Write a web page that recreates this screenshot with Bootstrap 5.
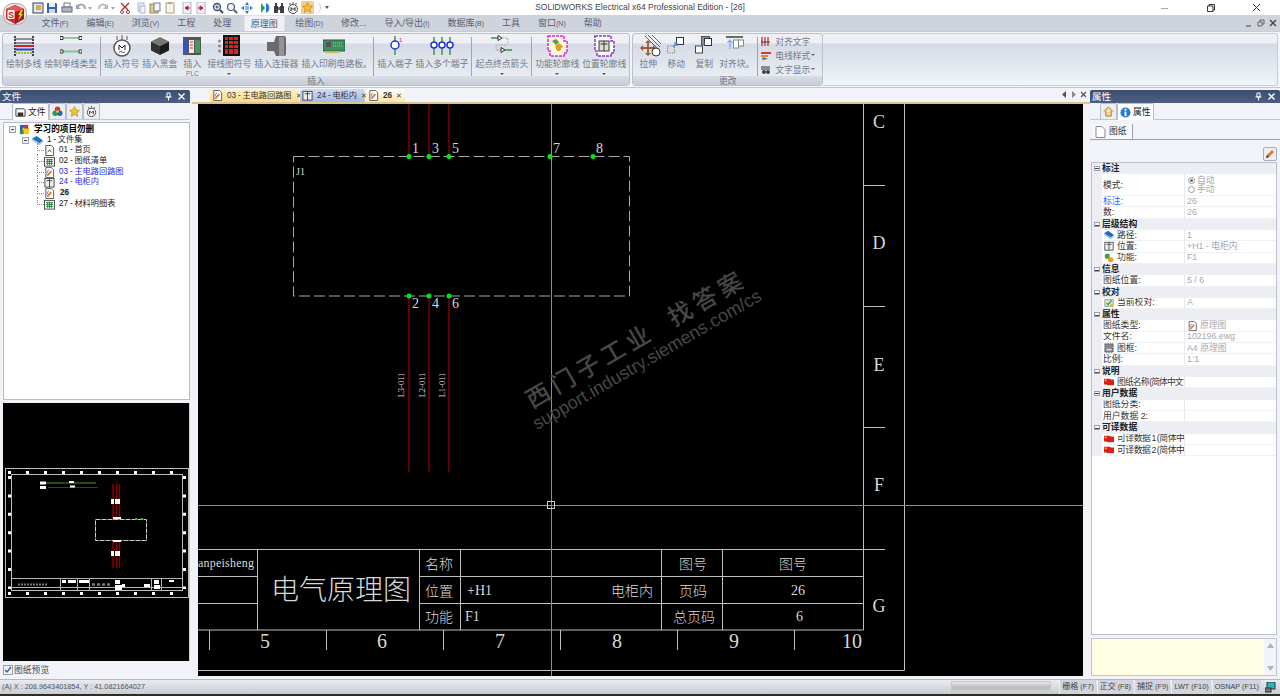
<!DOCTYPE html>
<html lang="zh-CN">
<head>
<meta charset="UTF-8" />
<title>SOLIDWORKS Electrical x64 Professional Edition - [26]</title>
<link href="https://cdn.jsdelivr.net/npm/bootstrap@5.3.3/dist/css/bootstrap.min.css" rel="stylesheet" />
<style>
  html, body { height: 696px; overflow: hidden; }
  body { width: 1280px; background: #f2f3f8; font-family: "Liberation Sans", "Noto Sans CJK SC", sans-serif; font-size: 8.8px; line-height: 11px; color: #333; }
  svg { display: block; flex: none; }

  /* title + quick access */
  .app-title { height: 15px; background: #fff; position: relative; flex: none; }
  .app-logo { position: absolute; left: 3px; top: 3px; z-index: 3; }
  .qat { position: absolute; left: 32px; top: 1px; height: 13px; padding-right: 6px; border-right: 1px solid #c6cad4; border-radius: 0 8px 8px 0; }
  .qat-btn { width: 12px; height: 12px; }
  .qg0 { margin-left: 0; } .qg1 { margin-left: 1px; } .qg2 { margin-left: 2px; } .qg3 { margin-left: 3px; }
  .qg4 { margin-left: 4px; } .qg5 { margin-left: 5px; } .qg7 { margin-left: 7px; }
  .qat-drop { position: absolute; left: 325px; top: 6px; width: 0; height: 0; border: 2px solid transparent; border-top: 3px solid #555; }
  .app-name { text-align: center; font: 8.5px/15px "Liberation Sans", sans-serif; color: #444; }
  .win-btns { position: absolute; right: 0; top: 0; }
  .win-btn { width: 46px; height: 15px; display: flex; align-items: center; justify-content: center; }

  /* menu row */
  .menu-row { height: 16px; background: #cfd3dc; flex: none; padding-left: 33px; position: relative; }
  .menu-row a { color: #59606e; text-decoration: none; font-size: 9px; line-height: 16px; display: block; text-align: center; white-space: nowrap; padding: 0 8.5px; margin-right: 1px; }
  .menu-row a small { font-size: 7px; }
  .menu-row a.on { background: #eff1f6; border-radius: 3px 3px 0 0; padding: 0 6px; margin: 0 2px 0 3px; color: #4e5562; border: 1px solid #dfe2e9; border-bottom: 0; }
  .mdi-btns { position: absolute; right: 3px; top: 4px; }

  /* ribbon */
  .ribbon { height: 57px; flex: none; background: #f4f5f9; border-bottom: 1px solid #c3c6ce; border-top: 1px solid #c8ccd6; padding: 1px 2px; gap: 2px; }
  .rb-group { height: 53px; border: 1px solid #bcc0cb; border-radius: 3px; background: linear-gradient(#eef0f6 0, #eef0f6 9px, #d6dae5 10px, #eef3f6 100%); position: relative; padding: 1px 3px 0; }
  .rb-fill { flex-grow: 1; height: 53px; margin-left: -2px; border: 1px solid #c9ccd5; border-left: 0; border-radius: 0 3px 3px 0; background: linear-gradient(#eef0f6 0, #eef0f6 9px, #d6dae5 10px, #eef6f9 100%); }
  .rb-cap { position: absolute; left: 0; right: 0; bottom: 0; height: 9px; background: linear-gradient(#d9dde6, #c8ccd7); text-align: center; color: #6f7785; line-height: 10px; font-size: 8.8px; border-radius: 0 0 3px 3px; }
  .rb-item { text-align: center; color: #727a89; white-space: nowrap; flex: none; }
  .rb-item > svg { margin: 0 auto 2px; }
  .rb-gap { margin-left: 3px; }
  .rb-gap-l { margin-left: 10px; }
  .rb-gap-m { margin-left: 6px; }
  .rb-note { font-size: 6.5px; line-height: 7px; }
  .rb-caret { width: 0; height: 0; margin: 3px auto 0; border: 2px solid transparent; border-top: 2px solid #555; }
  .rb-sep { width: 1px; height: 39px; background: #9fa4af; margin: 2px 3px 0; flex: none; }
  .rb-wide { width: 65px; }
  .rb-plc { width: 24px; }
  .rb-thin { width: 18px; }
  .rb-align { width: 31px; }
  .rb-mini { color: #727a89; height: 14px; line-height: 14px; white-space: nowrap; }
  .mini-caret { display: inline-block; width: 0; height: 0; border: 2px solid transparent; border-top: 2px solid #666; margin-left: 1px; vertical-align: 1px; }

  /* docking panels */
  .side-l { width: 192px; flex: none; padding: 2px 2px 0 0; }
  .side-r { width: 190px; flex: none; padding: 2px 0 0 0; }
  .dock-bar { height: 13px; background: linear-gradient(#3c4f72, #4c5f83); color: #fff; font-size: 9.5px; line-height: 13px; padding: 0 4px 0 2px; flex: none; border-radius: 2px 2px 0 0; }
  .dock-tabs { height: 17px; flex: none; border-bottom: 1px solid #c3c6cf; padding-left: 12px; }
  .side-r .dock-tabs { padding-left: 10px; }
  .dock-tab { height: 16px; border: 1px solid #b9bdc8; border-bottom: 0; background: #eceef4; border-radius: 2px 2px 0 0; padding: 0 2px; color: #222; line-height: 15px; font-size: 8.8px; gap: 2px; }
  .dock-tab.on { background: #fff; height: 17px; padding: 0 2px; }
  .dock-tab svg { width: 11px; height: 11px; }
  .tree-box { height: 278px; margin: 2px 0 3px 3px; background: #fff; border: 1px solid #b7bbc6; padding-top: 1px; flex: none; font-size: 8.2px; word-spacing: -.5px; }
  .tree-row { height: 10.7px; line-height: 10.7px; white-space: nowrap; color: #222; position: relative; }
  .tree-root { padding-left: 5px; font-weight: 700; font-size: 8.6px; color: #000; }
  .tree-sub { padding-left: 18px; }
  .tree-leaf { padding-left: 40px; }
  .tree-leaf::before { content: ""; position: absolute; left: 33px; top: -2px; height: 8px; width: 7px; border-left: 1px dotted #888; border-bottom: 1px dotted #888; }
  .tree-leaf.blue-ln { color: #2b2bdc; }
  .tree-cur { background: #eef0f4; font-weight: 700; padding: 0 1px; }
  .tree-plus { width: 7px; height: 7px; border: 1px solid #9aa2b0; background: #eef1f6; margin-right: 3px; position: relative; flex: none; }
  .tree-plus::after { content: ""; position: absolute; left: 1px; right: 1px; top: 2px; height: 1px; background: #445; }
  .preview-box { height: 258px; margin-left: 3px; background: #000; flex: none; border: 1px solid #c8ccd4; border-width: 0 1px 0 0; }
  .prev-check { height: 18px; margin-left: 3px; font-size: 8.8px; color: #444; }
  .prev-tick { width: 10px; height: 10px; border: 1px solid #98a0ae; background: #eef2f8; margin-right: 1px; }

  /* documents */
  .doc-col { width: 898px; flex: none; }
  .doc-tabs { height: 16px; flex: none; padding: 1px 0 0 18px; border-bottom: 2px solid #d9c48f; position: relative; gap: 1px; word-spacing: -.5px; }
  .doc-tab { height: 13px; padding: 0 3px 0 2px; line-height: 13px; font-size: 8.2px; color: #333; white-space: nowrap; border-radius: 3px 3px 0 0; }
  .doc-tab b { font-weight: 700; }
  .doc-tab.t-org { background: linear-gradient(#fff3c9, #ffd98a); width: 89px; }
  .doc-tab.t-blu { background: linear-gradient(#cfdcf2, #a5bde2); width: 65px; }
  .doc-tab.t-yel { background: linear-gradient(#fff, #ffe6a8); width: 39px; }
  .doc-x { font-size: 7px; margin-left: auto; color: #444; }
  .doc-ctl { position: absolute; right: 3px; top: 3px; }
  .canvas-wrap { margin-left: 6px; width: 885px; height: 572px; background: #000; flex: none; }

  /* properties */
  .sub-tab { height: 16px; margin-top: 4px; border-bottom: 1px solid #9aa0ad; flex: none; padding-left: 2px; }
  .sub-tab span { display: flex; align-items: center; gap: 3px; padding: 0 5px 0 3px; height: 15px; border-right: 1px solid #9aa0ad; color: #333; font-size: 8.8px; background: #f7f8fb; }
  .edit-row { height: 22px; flex: none; padding-right: 3px; padding-top: 7px; }
  .edit-btn { width: 14px; height: 14px; border: 1px solid #a8adb8; background: #eceef3; border-radius: 2px; }
  .prop-box { height: 473px; margin: 0 3px 0 1px; background: #fff; border: 1px solid #bcc0ca; flex: none; }
  .p-row { height: 11.32px; line-height: 11px; display: flex; white-space: nowrap; color: #333; }
  .p-row.tall { height: 21.7px; line-height: 20px; }
  .p-group { background: #eceef3; font-weight: 700; color: #222; }
  .p-group .p-sign { width: 10px; flex: none; position: relative; }
  .p-group .p-sign::after { content: ""; position: absolute; left: 2px; top: 3px; width: 6px; height: 5px; border: 1px solid #9aa0ad; background: linear-gradient(#fff 1.5px, #445 1.5px, #445 2.5px, #fff 2.5px); }
  .p-gut { width: 10px; flex: none; background: #eceef3; }
  .p-key { width: 83px; flex: none; padding-left: 1px; overflow: hidden; border-right: 1px solid #e6e8ed; display: flex; align-items: center; gap: 2px; border-bottom: 1px solid #f0f1f4; }
  .p-tight { letter-spacing: -.45px; word-spacing: -1px; }
  .p-tighter { letter-spacing: -.9px; word-spacing: -1px; }
  .p-val { flex-grow: 1; padding-left: 2px; color: #a5a8ae; border-bottom: 1px solid #f0f1f4; display: flex; align-items: center; gap: 2px; }
  .p-radio { line-height: 9.5px; color: #a5a8ae; padding-left: 1px; padding-top: 1px; }
  .p-radio i { display: inline-block; width: 7px; height: 7px; border: 1px solid #9a9a9a; border-radius: 50%; margin-right: 2px; vertical-align: -1px; }
  .p-radio i.on { background: radial-gradient(#777 35%, #fff 45%); }
  .hint-box { height: 38px; margin: 3px 3px 0 1px; background: #ffffe3; border: 1px solid #c3c6ce; flex: none; position: relative; }
  .hint-sb { width: 12px; margin-left: auto; height: 100%; background: #f3f4f8; }

  /* status */
  .status-bar { height: 15px; flex: none; background: linear-gradient(#e9ebf0, #c9ccd5); border-top: 1px solid #b5b8c1; color: #555; font-size: 7.3px; line-height: 14px; padding-left: 2px; }
  .status-progress { width: 100px; height: 12px; margin-left: auto; background: linear-gradient(#e5e6e8, #b7b9b9 60%, #d5d6d8); border: 1px solid #c7cad1; }
  .status-btn { padding: 0 2px; height: 15px; text-align: center; border-left: 1px solid #f0f1f4; background: #d2d5dd; margin-left: 1px; white-space: nowrap; color: #444; }
  .status-btn b { font-weight: 400; font-size: 8px; }
  .task-strip { height: 3px; background: #2c2c24; flex: none; }

  /* drawing text */
  .cad-s { font-family: "Liberation Serif", "Noto Sans CJK SC", serif; fill: #d8d8d8; }
  .cad-c { font-family: "Noto Sans CJK SC", sans-serif; font-weight: 300; fill: #d8d8d8; }
</style>
</head>
<body class="d-flex flex-column">

<svg width="0" height="0" class="position-absolute">
  <defs>
    <symbol id="i-doc" viewBox="0 0 12 12"><path d="M2 .5h6l2.5 2.5v8.500H2z" fill="#fff" stroke="#555"/><path d="M3.500 9.500 8 4.500" stroke="#e8732a" stroke-width="2"/><path d="M3 7 5 3" stroke="#4a7fd0"/></symbol>
    <symbol id="i-plain" viewBox="0 0 12 12"><path d="M2 .5h6l2.500 2.500v8.500H2z" fill="#fff" stroke="#444"/><path d="M4 8l2-3 2 3" fill="none" stroke="#444"/></symbol>
    <symbol id="i-grid" viewBox="0 0 12 12"><rect x=".5" y="1.500" width="11" height="9.500" fill="#fff" stroke="#444"/><path d="M2 4h8M2 6h8M2 8h8M4 3v7M6 3v7M8 3v7" stroke="#1d8a3a"/></symbol>
    <symbol id="i-cab" viewBox="0 0 12 12"><rect x="1" y="1.500" width="10" height="9.500" fill="#eee" stroke="#444"/><path d="M6 1.500V11M3 4h6" stroke="#444"/></symbol>
    <symbol id="i-book" viewBox="0 0 12 12"><path d="M0 4 5 1l7 5-4 3z" fill="#1f6fc0"/><path d="M0 4v2l8 5 4-3V6L8 9z" fill="#9ec4e8"/></symbol>
    <symbol id="i-proj" viewBox="0 0 12 12"><rect x="1" y="1" width="7" height="10" fill="#2a5fc4"/><rect x="4" y="4" width="7" height="7" fill="#f3c91e"/><rect x="6" y="1" width="4" height="4" fill="#d7273a"/><rect x="1" y="7" width="4" height="4" fill="#2a9a42"/></symbol>
    <symbol id="i-func" viewBox="0 0 12 12"><rect x="1" y="1" width="6" height="6" rx="2" fill="#4da03c"/><rect x="5" y="5" width="6" height="6" rx="2" fill="#e7a51f"/></symbol>
    <symbol id="i-flag" viewBox="0 0 12 12"><path d="M0 2h7l1 1h4v7H4L3 9H0z" fill="#d8201c"/><path d="M1 3h2v2H1z" fill="#f5d31e"/></symbol>
    <symbol id="i-frame" viewBox="0 0 12 12"><rect x="1" y="1" width="10" height="10" fill="#888" stroke="#444" stroke-dasharray="2 1"/><rect x="3" y="7" width="6" height="2" fill="#ddd"/></symbol>
    <symbol id="i-check" viewBox="0 0 12 12"><path d="M1 2h10v8H1z" fill="#dfe9d8" stroke="#7a9a78"/><path d="M3 6l2 2 4-5" fill="none" stroke="#3e8f3e" stroke-width="1.500"/><rect x="8" y="7" width="3" height="3" fill="#e2b547"/></symbol>
    <symbol id="i-m" viewBox="0 0 12 12"><circle cx="6" cy="7" r="4.500" fill="#fff" stroke="#444"/><path d="M4 9V5.500l2 2 2-2V9" fill="none" stroke="#222"/><path d="M3 3V1M6 2V0M9 3V1" stroke="#555"/></symbol>
    <symbol id="i-star" viewBox="0 0 12 12"><path d="M6 .5 7.700 4.300l3.800.4-2.900 2.600.9 4L6 9.200l-3.500 2.100.9-4L.5 4.700l3.800-.4z" fill="#f6c32c" stroke="#b7802a" stroke-width=".7"/></symbol>
    <symbol id="i-pin" viewBox="0 0 9 9"><path d="M3 1h3v4H3zM1.500 5h6M4.500 5v3.500" fill="none" stroke="#fff"/></symbol>
    <symbol id="i-close" viewBox="0 0 9 9"><path d="M1.500 1.500l6 6M7.500 1.500l-6 6" stroke="#fff" stroke-width="1.400"/></symbol>
  </defs>
</svg>

<header class="app-title">
  <svg class="app-logo" width="24" height="22" viewBox="0 0 24 22"><rect x=".5" y=".5" width="23" height="21" rx="9" fill="#e4e4e6" stroke="#aaa"/><path d="M3 6 12 2l9 4v10l-9 5-9-5z" fill="#d8262e"/><path d="M12 9l9-3v10l-9 5z" fill="#a8161e"/><path d="M3 6 12 2l9 4-9 3z" fill="#e8565c"/><rect x="4.500" y="7" width="7" height="9" fill="#fff" rx="1"/><text x="5.300" y="14.500" font-family="Liberation Sans" font-weight="700" font-size="8.500" fill="#b01e25">S</text><path d="M18 7l-3 5h2l-2 6 5-7h-2l2-4z" fill="#f7d21f"/></svg>
  <div class="qat d-flex align-items-center">
    <svg class="qat-btn" viewBox="0 0 12 12"><rect x="1" y="1" width="10" height="10" fill="#d8e6f6" stroke="#345"/><rect x="4" y="3" width="5" height="5" fill="#e2a93a"/></svg>
    <svg class="qat-btn qg2" viewBox="0 0 12 12"><path d="M1 1h9l1 1v9H1z" fill="#3c64a8"/><rect x="3" y="1" width="6" height="4" fill="#e8eef8"/><rect x="3" y="7" width="6" height="4" fill="#cdd9ec"/></svg>
    <svg class="qat-btn qg3" viewBox="0 0 12 12"><rect x="3" y="1" width="6" height="4" fill="#fff" stroke="#777"/><rect x="1" y="5" width="10" height="5" fill="#aeb4c0" stroke="#667"/></svg>
    <svg class="qat-btn qg2" viewBox="0 0 12 12"><path d="M2 5c3-4 8-3 8 2" fill="none" stroke="#9aa2b0" stroke-width="2"/><path d="M1 2v5h5z" fill="#9aa2b0"/></svg>
    <svg class="qg0" width="6" height="12" viewBox="0 0 6 12"><path d="M1 5h4L3 8z" fill="#aaa"/></svg>
    <svg class="qat-btn qg4" viewBox="0 0 12 12"><path d="M10 5C7 1 2 2 2 7" fill="none" stroke="#b5bac5" stroke-width="2"/><path d="M11 2v5H6z" fill="#b5bac5"/></svg>
    <svg class="qg1" width="6" height="12" viewBox="0 0 6 12"><path d="M1 5h4L3 8z" fill="#aaa"/></svg>
    <svg class="qat-btn qg3" viewBox="0 0 12 12"><path d="M2 1l7 7M10 1 3 8" stroke="#a8282c" stroke-width="1.300"/><circle cx="3" cy="10" r="1.500" fill="none" stroke="#b83035"/><circle cx="9" cy="10" r="1.500" fill="none" stroke="#b83035"/></svg>
    <svg class="qat-btn qg4" viewBox="0 0 12 12"><rect x="3" y="1" width="6" height="8" fill="#e7edf7" stroke="#a9b8d2"/><rect x="5" y="4" width="5" height="7" fill="#eef3fa" stroke="#a9b8d2"/></svg>
    <svg class="qat-btn qg2" viewBox="0 0 12 12"><rect x="1" y="2" width="8" height="9" fill="#dfc99a" stroke="#98844f"/><rect x="5" y="1" width="6" height="8" fill="#f4f6fb" stroke="#6d7c9a"/></svg>
    <svg class="qat-btn qg3" viewBox="0 0 12 12"><rect x="2" y="1" width="8" height="10" fill="#f3f3ef" stroke="#a99d7a"/><rect x="4" y="0" width="4" height="2" fill="#c2a768"/></svg>
    <svg class="qat-btn qg5" viewBox="0 0 12 12"><path d="M2 0h8v12H2z" fill="#eef2fa" stroke="#a6b3cb"/><path d="M4 6h5M4 6l3-2v4z" stroke="#d01a22" fill="#d01a22"/></svg>
    <svg class="qat-btn qg2" viewBox="0 0 12 12"><path d="M2 0h8v12H2z" fill="#eef2fa" stroke="#a6b3cb"/><path d="M3 6h5M8 6 5 4v4z" stroke="#d01a22" fill="#d01a22"/></svg>
    <svg class="qat-btn qg5" viewBox="0 0 12 12"><circle cx="5" cy="5" r="3.500" fill="#dbe7f5" stroke="#36465e" stroke-width="1.300"/><path d="M8 8l3 3" stroke="#36465e" stroke-width="2"/><path d="M3.500 5h3M5 3.500v3" stroke="#36465e"/></svg>
    <svg class="qat-btn qg2" viewBox="0 0 12 12"><circle cx="5" cy="5" r="3.500" fill="#eef3fa" stroke="#4a5a72" stroke-width="1.200"/><path d="M8 8l3 3" stroke="#4a5a72" stroke-width="2"/></svg>
    <svg class="qat-btn qg3" viewBox="0 0 12 12"><path d="M6 0l2 3H4zM6 12 4 9h4zM0 6l3-2v4zM12 6 9 4v4z" fill="#2d6fd4"/><rect x="4" y="4" width="4" height="4" fill="#8fb9ee"/></svg>
    <svg class="qat-btn qg7" viewBox="0 0 12 12"><path d="M1 1l4 5-4 5z" fill="#2f9a58"/><path d="M6 1c4 1 5 8 0 10z" fill="#2a7ec8"/></svg>
    <svg class="qat-btn qg1" viewBox="0 0 12 12"><path d="M1 4h4v7H1zM7 4h4v7H7zM2 1h2v3H2zM8 1h2v3H8z" fill="#3b3f48"/><rect x="5" y="5" width="2" height="3" fill="#666"/></svg>
    <svg class="qat-btn qg2" viewBox="0 0 12 12"><use href="#i-m"/></svg>
    <svg class="qg2" width="13" height="13" viewBox="0 0 13 13"><rect width="13" height="13" fill="#f7cf8b"/><use href="#i-star" x="1" y="1" width="11" height="11"/></svg>
  </div>
  <span class="qat-drop"></span>
  <div class="app-name">SOLIDWORKS Electrical x64 Professional Edition - [26]</div>
  <div class="win-btns d-flex">
    <div class="win-btn"><svg width="10" height="10" viewBox="0 0 10 10"><path d="M1 5.500h7" stroke="#aaa"/></svg></div>
    <div class="win-btn"><svg width="10" height="10" viewBox="0 0 10 10"><path d="M1.500 3h5.500v5.500H1.500zM3 3V1.500h5.500V7H7" fill="none" stroke="#333"/></svg></div>
    <div class="win-btn"><svg width="10" height="10" viewBox="0 0 10 10"><path d="M1 1l7 7M8 1 1 8" stroke="#333"/></svg></div>
  </div>
</header>

<nav class="menu-row d-flex">
  <a href="#">文件<small>(F)</small></a>
  <a href="#">编辑<small>(E)</small></a>
  <a href="#">浏览<small>(V)</small></a>
  <a href="#">工程</a>
  <a href="#">处理</a>
  <a href="#" class="on">原理图</a>
  <a href="#">绘图<small>(D)</small></a>
  <a href="#">修改...</a>
  <a href="#">导入/导出<small>(I)</small></a>
  <a href="#">数据库<small>(B)</small></a>
  <a href="#">工具</a>
  <a href="#">窗口<small>(N)</small></a>
  <a href="#">帮助</a>
  <div class="mdi-btns d-flex gap-1">
    <svg width="8" height="8" viewBox="0 0 8 8"><path d="M1 7h5" stroke="#444"/></svg>
    <svg width="8" height="8" viewBox="0 0 8 8"><path d="M1 3h4v4H1zM3 3V1h4v4H5" fill="none" stroke="#666"/></svg>
    <svg width="8" height="8" viewBox="0 0 8 8"><path d="M1 1l6 6M7 1 1 7" stroke="#444" stroke-width="1.300"/></svg>
  </div>
</nav>

<section class="ribbon d-flex">
  <div class="rb-group d-flex">
    <div class="rb-item"><svg width="22" height="22" viewBox="0 0 22 22"><path d="M2 1v20M20 1v20" stroke="#444" stroke-dasharray="2 1" stroke-width="2"/><path d="M2 4h18" stroke="#333"/><path d="M2 8h18" stroke="#333"/><path d="M2 11h18" stroke="#d02027" stroke-width="2"/><path d="M2 14.500h18" stroke="#2b3fd1" stroke-width="2"/><path d="M2 18h18" stroke="#9ac227" stroke-width="2" stroke-dasharray="2 1"/></svg>绘制多线</div>
    <div class="rb-item rb-gap"><svg width="22" height="22" viewBox="0 0 22 22"><path d="M3 3h16" stroke="#3e9d46"/><path d="M3 16.500h16" stroke="#84c98c" stroke-width="2"/><path d="M0 1.500h3v3H0zM19 1.500h3v3h-3zM0 15h3v3H0zM19 15h3v3h-3z" fill="#fff" stroke="#333"/></svg>绘制单线类型</div>
    <div class="rb-sep"></div>
    <div class="rb-item"><svg width="22" height="22" viewBox="0 0 22 22"><circle cx="11" cy="13" r="8" fill="#fff" stroke="#555" stroke-width="1.500"/><path d="M8 15V10l3 3 3-3v5" fill="none" stroke="#222"/><path d="M8 17q1.500-1 3 0t3 0" fill="none" stroke="#555"/><path d="M6 5V1M11 5V0M16 5V1" stroke="#555"/></svg>插入符号</div>
    <div class="rb-item rb-gap"><svg width="22" height="22" viewBox="0 0 22 22"><path d="M11 2 20 6.500 11 11 2 6.500z" fill="#777"/><path d="M2 6.500 11 11v9L2 15.500z" fill="#333"/><path d="M20 6.500 11 11v9l9-4.500z" fill="#1c1c1c"/></svg>插入黑盒</div>
    <div class="rb-item rb-plc rb-gap"><svg width="18" height="22" viewBox="0 0 18 22"><rect y="2" width="18" height="18" fill="#555"/><rect x="1" y="5" width="4" height="13" fill="#3554bf"/><rect x="6" y="5" width="5" height="13" fill="#eee"/><rect x="12" y="5" width="5" height="13" fill="#3f9b55"/><path d="M7 7h3M7 10h3M7 13h3" stroke="#c33"/></svg>插入<div class="rb-note">PLC</div></div>
    <div class="rb-item rb-gap"><svg width="22" height="22" viewBox="0 0 22 22"><rect x="5" width="17" height="21" fill="#111"/><path d="M7 2h3v3H7zM11 2h4v3h-4zM16 2h4v3h-4zM7 6h3v3H7zM11 6h4v3h-4zM16 6h4v3h-4zM7 10h3v3H7zM11 10h4v3h-4zM16 10h4v3h-4zM7 14h3v5H7zM11 14h4v5h-4zM16 14h4v5h-4z" fill="#d8231f"/><circle cx="1.500" cy="6" r="1.500" fill="#888"/><circle cx="1.500" cy="11" r="1.500" fill="#888"/><circle cx="1.500" cy="16" r="1.500" fill="#888"/></svg>接线图符号<div class="rb-caret"></div></div>
    <div class="rb-item rb-gap"><svg width="22" height="22" viewBox="0 0 22 22"><path d="M11 1h8q2 0 2 2v16q0 2-2 2h-8L9 16H2v-9h7z" fill="#6a6a6a"/><path d="M14 2h5v19h-5z" fill="#949494"/></svg>插入连接器</div>
    <div class="rb-item rb-wide rb-gap me-1"><svg width="22" height="22" viewBox="0 0 22 22"><rect y="5" width="22" height="11" fill="#3f8f5a" stroke="#2a5f3d"/><path d="M3 7h5v5H3z" fill="#555"/><path d="M10 8h9M10 11h9" stroke="#d8c36b" stroke-dasharray="1 1"/><path d="M2 16h14v2H2z" fill="#c8b25a"/></svg>插入印刷电路板。</div>
    <div class="rb-sep"></div>
    <div class="rb-item"><svg width="22" height="22" viewBox="0 0 22 22"><path d="M11 1v5M11 14v6" stroke="#3d9c46" stroke-width="1.500"/><circle cx="11" cy="10" r="4" fill="#fff" stroke="#1f35d8" stroke-width="1.500"/><text x="15" y="7" font-size="6" fill="#d22" font-family="Liberation Sans">1</text></svg>插入端子</div>
    <div class="rb-item rb-gap"><svg width="24" height="22" viewBox="0 0 24 22"><path d="M4 2v18M12 2v18M20 2v18" stroke="#3d9c46" stroke-width="1.500"/><circle cx="4" cy="10" r="3" fill="#fff" stroke="#1f35d8" stroke-width="1.500"/><circle cx="12" cy="10" r="3" fill="#fff" stroke="#1f35d8" stroke-width="1.500"/><circle cx="20" cy="10" r="3" fill="#fff" stroke="#1f35d8" stroke-width="1.500"/></svg>插入多个端子</div>
    <div class="rb-sep"></div>
    <div class="rb-item"><svg width="22" height="22" viewBox="0 0 22 22"><path d="M0 3h7" stroke="#2f9a3e" stroke-width="1.500"/><path d="M7 .5 11 3 7 5.500z" fill="#fff" stroke="#333"/><path d="M11 3h6v7M5 14v-4h10" fill="none" stroke="#aaa" stroke-dasharray="2 1"/><path d="M5 15h5" stroke="#aaa"/><path d="M10 12.500 14 15l-4 2.500z" fill="#fff" stroke="#333"/><path d="M14 15h7" stroke="#2f9a3e" stroke-width="1.500"/></svg>起点终点箭头<div class="rb-caret"></div></div>
    <div class="rb-sep"></div>
    <div class="rb-item"><svg width="22" height="22" viewBox="0 0 22 22"><path d="M2 1h16v5h3v12h-3v3H4v-5H2z" fill="#fff9e0" stroke="#ee1fd8" stroke-width="1.500" stroke-dasharray="3 1"/><path d="M6 6l4-2 3 3-3 3z" fill="#4da03c"/><path d="M9 11l4-3 4 3-3 5h-3z" fill="#dfa21f"/></svg>功能轮廓线<div class="rb-caret"></div></div>
    <div class="rb-item rb-gap"><svg width="22" height="22" viewBox="0 0 22 22"><path d="M2 1h16v5h3v12h-3v3H4v-5H2z" fill="#fff" stroke="#8a35e0" stroke-width="1.500" stroke-dasharray="3 1"/><rect x="6" y="6" width="10" height="10" fill="#ddd" stroke="#333"/><path d="M11 6v10M7.500 9h7" stroke="#333"/></svg>位置轮廓线<div class="rb-caret"></div></div>
    <div class="rb-cap">插入</div>
  </div>

  <div class="rb-group d-flex">
    <div class="rb-item rb-thin rb-gap"><svg width="24" height="22" viewBox="0 0 24 22" class="mx-n1"><path d="M6 1l12 12M9 0l12 12M13 0l9 9" stroke="#d23a3a"/><path d="M9 8v10M4 13h10" stroke="#9a5b2d" stroke-width="1.800"/><path d="M1 13l3-3v6zM17 13l-3-3v6zM9 21l-3-3h6zM9 5l-3 3h6z" fill="#9a5b2d"/><circle cx="17" cy="17" r="4" fill="#fff" stroke="#333"/></svg>拉伸</div>
    <div class="rb-item rb-thin rb-gap-l"><svg width="18" height="22" viewBox="0 0 18 22"><rect x=".5" y="11" width="7" height="7" fill="none" stroke="#888" stroke-dasharray="1.500 1"/><rect x="9.500" y="2.500" width="7" height="7" fill="#fff" stroke="#333"/><path d="M6 12l4-4M10 8H7M10 8v3" fill="none" stroke="#3a7fe0" stroke-width="1.200"/></svg>移动</div>
    <div class="rb-item rb-thin rb-gap-l"><svg width="18" height="22" viewBox="0 0 18 22"><rect x=".5" y="11" width="7" height="7" fill="#fff" stroke="#444"/><rect x="6.500" y="1.500" width="8" height="8" fill="#8e8e8e" stroke="#555"/><rect x="9.500" y="3.500" width="7" height="7" fill="#fff" stroke="#333"/><path d="M6 12l4-4" stroke="#3a7fe0" stroke-width="1.200"/></svg>复制</div>
    <div class="rb-item rb-align rb-gap-m me-1"><svg width="18" height="22" viewBox="0 0 18 22"><path d="M0 2h17" stroke="#222" stroke-width="1.300"/><path d="M4 14V5M1.500 8 4 5l2.500 3" fill="none" stroke="#7fb0ee" stroke-width="1.300"/><rect x="7.500" y="5" width="5" height="8" fill="#fff" stroke="#888"/><rect x="12.500" y="5" width="5" height="6" fill="#fff" stroke="#888"/></svg>对齐块。</div>
    <div class="rb-sep"></div>
    <div class="me-1">
      <div class="rb-mini d-flex align-items-center gap-1"><svg width="10" height="10" viewBox="0 0 10 10"><path d="M1 0v9M4 0v9M7 0v9" stroke="#c22" stroke-width="1.200"/><path d="M0 5h9" stroke="#333"/></svg>对齐文字</div>
      <div class="rb-mini d-flex align-items-center gap-1"><svg width="10" height="10" viewBox="0 0 10 10"><path d="M0 2h10" stroke="#d23838" stroke-width="2"/><path d="M0 5h7" stroke="#e08a2a" stroke-width="2"/><path d="M7 8 1 9l1-3z" fill="#666"/></svg><span>电线样式<span class="mini-caret"></span></span></div>
      <div class="rb-mini d-flex align-items-center gap-1"><svg width="10" height="10" viewBox="0 0 10 10"><path d="M0 2h9M0 4h9" stroke="#333"/><circle cx="3" cy="7" r="2" fill="#444"/><circle cx="7" cy="7" r="2" fill="#444"/></svg><span>文字显示<span class="mini-caret"></span></span></div>
    </div>
    <div class="rb-cap">更改</div>
  </div>

  <div class="rb-fill"></div>
</section>

<main class="d-flex flex-grow-1">
  <aside class="side-l d-flex flex-column">
    <div class="dock-bar d-flex align-items-center"><span class="flex-grow-1">文件</span><svg width="9" height="9" class="me-1"><use href="#i-pin"/></svg><svg width="9" height="9"><use href="#i-close"/></svg></div>
    <div class="dock-tabs d-flex">
      <div class="dock-tab on d-flex align-items-center"><svg viewBox="0 0 12 12"><path d="M1 2h9l1 1v7H1z" fill="#fff" stroke="#333"/><rect x="3" y="6" width="6" height="4" fill="#333"/></svg>文件</div>
      <div class="dock-tab d-flex align-items-center"><svg viewBox="0 0 12 12"><circle cx="6" cy="3.500" r="3" fill="#d7392f"/><circle cx="3.500" cy="8" r="3" fill="#2b9a44"/><circle cx="8.500" cy="8" r="3" fill="#2a62c8"/><circle cx="6" cy="6" r="1.500" fill="#f1c522"/></svg></div>
      <div class="dock-tab d-flex align-items-center"><svg><use href="#i-star"/></svg></div>
      <div class="dock-tab d-flex align-items-center"><svg><use href="#i-m"/></svg></div>
    </div>
    <div class="tree-box">
      <div class="tree-row tree-root d-flex align-items-center"><span class="tree-plus"></span><svg width="11" height="11" class="me-1"><use href="#i-proj"/></svg>学习的项目勿删</div>
      <div class="tree-row tree-sub d-flex align-items-center"><span class="tree-plus"></span><svg width="11" height="11" class="me-1"><use href="#i-book"/></svg>1 - 文件集</div>
      <div class="tree-row tree-leaf d-flex align-items-center"><svg width="11" height="11" class="me-1"><use href="#i-plain"/></svg>01 - 首页</div>
      <div class="tree-row tree-leaf d-flex align-items-center"><svg width="11" height="11" class="me-1"><use href="#i-grid"/></svg>02 - 图纸清单</div>
      <div class="tree-row tree-leaf blue-ln d-flex align-items-center"><svg width="11" height="11" class="me-1"><use href="#i-doc"/></svg>03 - 主电路回路图</div>
      <div class="tree-row tree-leaf blue-ln d-flex align-items-center"><svg width="11" height="11" class="me-1"><use href="#i-cab"/></svg>24 - 电柜内</div>
      <div class="tree-row tree-leaf d-flex align-items-center"><svg width="11" height="11" class="me-1"><use href="#i-doc"/></svg><span class="tree-cur">26</span></div>
      <div class="tree-row tree-leaf d-flex align-items-center"><svg width="11" height="11" class="me-1"><use href="#i-grid"/></svg>27 - 材料明细表</div>
    </div>
    <div class="preview-box">
      <svg width="187" height="258" viewBox="3 402 187 258">
        <rect x="5.500" y="467.500" width="183" height="129" fill="none" stroke="#bdbdbd"/>
        <rect x="11.500" y="473.500" width="171" height="116" fill="none" stroke="#bdbdbd"/>
        <path d="M8 471.500H186M8 592.500H186" stroke="#fff" stroke-width="3" stroke-dasharray="3 15"/>
        <path d="M9.500 475V588M184.500 475V588" stroke="#fff" stroke-width="3" stroke-dasharray="3 15.400"/>
        <path d="M45 482h51" stroke="#3f9a12"/><path d="M48 486.500h50" stroke="#c60000"/>
        <path d="M40 480.500h6v3h-6zM40 485h6v3h-6zM69 480h5v2h-5zM70 484.500h5v2h-5z" fill="#fff"/>
        <path d="M113 483v36M116.500 483v36M119.500 483v36M113 539v28M116.500 539v28M119.500 539v28" stroke="#8a0000" stroke-width="1.500"/>
        <path d="M111 498h3v5h-3zM115 498h3v5h-3zM118 498h2v5h-2zM111 550h3v5h-3zM115 550h3v5h-3zM118 550h2v5h-2z" fill="#fff"/>
        <rect x="95.500" y="518.500" width="51" height="21" fill="none" stroke="#ccc" stroke-dasharray="5 1"/>
        <path d="M113 516h8v2h-8zM113 539h8v2h-8z" fill="#fff"/>
        <path d="M135 517h2v2h-2zM141 517h2v2h-2z" fill="#2c2"/>
        <path d="M11.500 577.500h171M11.500 586.500h171M60.500 577v13M77.500 577v13M89.500 577v13M151.500 577v13M161.500 577v13" stroke="#b5b5b5"/>
        <path d="M62 579h4v3h-4zM68 579h8v3h-8zM79 579h10v3H79zM115 579h5v4h-5zM115 584h7v5h-7zM122 583h3v3h-3zM144 583h6v3h-6zM154 579h5v4h-5zM154 584h6v4h-6zM169 579h5v2h-5z" fill="#fff"/>
        <path d="M18 583.500h30" stroke="#777" stroke-dasharray="2 1" stroke-width="2"/>
        <path d="M92 583.500h18" stroke="#777" stroke-dasharray="3 2" stroke-width="2.500"/>
      </svg>
    </div>
    <div class="prev-check d-flex align-items-center"><span class="prev-tick d-flex"><svg width="8" height="8" viewBox="0 0 8 8"><path d="M1 4l2 2 4-5" fill="none" stroke="#3a5ea8" stroke-width="1.300"/></svg></span>图纸预览</div>
  </aside>

  <div class="doc-col d-flex flex-column">
    <div class="doc-tabs d-flex">
      <div class="doc-tab t-org d-flex align-items-center gap-1"><svg width="11" height="11"><use href="#i-doc"/></svg>03 - 主电路回路图<span class="doc-x">✕</span></div>
      <div class="doc-tab t-blu d-flex align-items-center gap-1"><svg width="11" height="11"><use href="#i-cab"/></svg>24 - 电柜内<span class="doc-x">✕</span></div>
      <div class="doc-tab t-yel d-flex align-items-center gap-1"><svg width="11" height="11"><use href="#i-doc"/></svg><b>26</b><span class="doc-x">✕</span></div>
      <div class="doc-ctl d-flex gap-1 align-items-center">
        <svg width="5" height="7" viewBox="0 0 5 7"><path d="M4 0v7L0 3.500z" fill="#555"/></svg>
        <svg width="5" height="7" viewBox="0 0 5 7"><path d="M1 0v7l4-3.500z" fill="#888"/></svg>
        <svg width="7" height="7" viewBox="0 0 7 7"><path d="M1 1l5 5M6 1 1 6" stroke="#555" stroke-width="1.200"/></svg>
      </div>
    </div>
    <div class="canvas-wrap">
      <svg width="885" height="572" viewBox="198 104 885 572">
        <g stroke="#c0c0c0" fill="none">
          <path d="M863.500 104V549M904.500 104V670.500H198M863.500 185.500H885M863.500 306.500H885M863.500 427.500H885"/>
          <path d="M198 549.500H885M257.500 549V630M419.500 549V630M460.500 549V630M661.500 549V630M722.500 549V630M863.500 549V630M198 576.500H257.500M419.500 576.500H863.500M198 603.500H257.500M419.500 603.500H863.500M198 630H863.500"/>
          <path d="M209.500 630V650M326.500 630V650M443.500 630V650M560.500 630V650M677.500 630V650M794.500 630V650"/>
        </g>
        <text class="cad-s" font-size="18" text-anchor="middle" x="879" y="128">C</text>
        <text class="cad-s" font-size="18" text-anchor="middle" x="879" y="249">D</text>
        <text class="cad-s" font-size="18" text-anchor="middle" x="879" y="371">E</text>
        <text class="cad-s" font-size="18" text-anchor="middle" x="879" y="491">F</text>
        <text class="cad-s" font-size="18" text-anchor="middle" x="879" y="612">G</text>
        <g class="cad-s" font-size="20" text-anchor="middle">
          <text x="265" y="648">5</text><text x="382" y="648">6</text><text x="500" y="648">7</text>
          <text x="617" y="648">8</text><text x="734" y="648">9</text><text x="852" y="648">10</text>
        </g>
        <text class="cad-s" font-size="12" x="198" y="567" textLength="56">anpeisheng</text>
        <text class="cad-c" font-size="28" x="271" y="600">电气原理图</text>
        <g class="cad-c" font-size="14">
          <text x="425" y="569">名称</text><text x="425" y="596">位置</text><text x="425" y="622">功能</text>
          <text x="679" y="569">图号</text><text x="679" y="596">页码</text><text x="673" y="622">总页码</text>
          <text x="779" y="569">图号</text><text x="611" y="596">电柜内</text>
        </g>
        <g class="cad-s" font-size="14">
          <text x="467" y="595">+H1</text><text x="465" y="621">F1</text>
          <text x="791" y="595">26</text><text x="796" y="621">6</text>
        </g>
        <path d="M409 104V156M429 104V156M449 104V156M409 296V472M429 296V472M449 296V472" stroke="#7d0000" stroke-width="1.500"/>
        <rect x="293.500" y="156.500" width="336" height="139.500" fill="none" stroke="#a8a8a8" stroke-dasharray="11 4"/>
        <g class="cad-s" font-size="14">
          <text x="412" y="153">1</text><text x="432" y="153">3</text><text x="452" y="153">5</text><text x="553" y="153">7</text><text x="596" y="153">8</text>
          <text x="412" y="308">2</text><text x="432" y="308">4</text><text x="452" y="308">6</text>
        </g>
        <text class="cad-s" font-size="10" x="296" y="175">J1</text>
        <g class="cad-s" font-size="8.500" text-anchor="middle">
          <text transform="translate(404 385) rotate(-90)">L3-011</text>
          <text transform="translate(425 385) rotate(-90)">L2-011</text>
          <text transform="translate(445 385) rotate(-90)">L1-011</text>
        </g>
        <g fill="#00e810">
          <circle cx="409" cy="156.500" r="2.500"/><circle cx="429" cy="156.500" r="2.500"/><circle cx="449" cy="156.500" r="2.500"/><circle cx="550" cy="156.500" r="2.500"/><circle cx="593" cy="156.500" r="2.500"/>
          <circle cx="409" cy="296" r="2.500"/><circle cx="429" cy="296" r="2.500"/><circle cx="449" cy="296" r="2.500"/>
        </g>
        <path d="M551.500 104V676M198 505.500H1083" stroke="#8f8f8f"/>
        <rect x="547.500" y="501.500" width="7" height="7" fill="none" stroke="#ccc"/>
        <g fill="#474747" font-family="'Liberation Sans','Noto Sans CJK SC',sans-serif">
          <text transform="translate(532 409) rotate(-30)" font-size="24" font-weight="500" letter-spacing="4.800">西门子工业<tspan dx="20">找答案</tspan></text>
          <text transform="translate(537 430) rotate(-30)" font-size="18">support.industry.siemens.com/cs</text>
        </g>
      </svg>
    </div>
  </div>

  <aside class="side-r d-flex flex-column">
    <div class="dock-bar d-flex align-items-center"><span class="flex-grow-1">属性</span><svg width="9" height="9" class="me-1"><use href="#i-pin"/></svg><svg width="9" height="9"><use href="#i-close"/></svg></div>
    <div class="dock-tabs d-flex">
      <div class="dock-tab d-flex align-items-center"><svg viewBox="0 0 12 12"><path d="M1 6 6 1l5 5M3 5v6h6V5" fill="#f5d58a" stroke="#a8791f"/></svg></div>
      <div class="dock-tab on d-flex align-items-center"><svg viewBox="0 0 12 12"><circle cx="6" cy="6" r="5.500" fill="#2a7bd0"/><rect x="5" y="5" width="2" height="5" fill="#fff"/><rect x="5" y="2" width="2" height="2" fill="#fff"/></svg>属性</div>
    </div>
    <div class="sub-tab d-flex"><span><svg width="11" height="12" viewBox="0 0 11 12"><path d="M1 .5h6l3 3v8H1z" fill="#fff" stroke="#888"/></svg>图纸</span></div>
    <div class="edit-row d-flex justify-content-end"><div class="edit-btn d-flex align-items-center justify-content-center"><svg width="10" height="10" viewBox="0 0 10 10"><path d="M1 9l1-3 5-5 2 2-5 5z" fill="#e07a26"/><path d="M1 9l1-3 2 2z" fill="#333"/></svg></div></div>
    <div class="prop-box">
      <div class="p-row p-group"><span class="p-sign"></span>标注</div>
      <div class="p-row tall"><span class="p-gut"></span><span class="p-key">模式:</span><span class="p-val"><span class="p-radio"><i class="on"></i>自动<br><i></i>手动</span></span></div>
      <div class="p-row"><span class="p-gut"></span><span class="p-key text-primary">标注:</span><span class="p-val">26</span></div>
      <div class="p-row"><span class="p-gut"></span><span class="p-key">数:</span><span class="p-val">26</span></div>
      <div class="p-row p-group"><span class="p-sign"></span>层级结构</div>
      <div class="p-row"><span class="p-gut"></span><span class="p-key"><svg width="12" height="10"><use href="#i-book"/></svg>路径:</span><span class="p-val">1</span></div>
      <div class="p-row"><span class="p-gut"></span><span class="p-key"><svg width="12" height="10"><use href="#i-cab"/></svg>位置:</span><span class="p-val">+H1 - 电柜内</span></div>
      <div class="p-row"><span class="p-gut"></span><span class="p-key"><svg width="12" height="10"><use href="#i-func"/></svg>功能:</span><span class="p-val">F1</span></div>
      <div class="p-row p-group"><span class="p-sign"></span>信息</div>
      <div class="p-row"><span class="p-gut"></span><span class="p-key">图纸位置:</span><span class="p-val">5 / 6</span></div>
      <div class="p-row p-group"><span class="p-sign"></span>校对</div>
      <div class="p-row"><span class="p-gut"></span><span class="p-key"><svg width="12" height="10"><use href="#i-check"/></svg>当前校对:</span><span class="p-val">A</span></div>
      <div class="p-row p-group"><span class="p-sign"></span>属性</div>
      <div class="p-row"><span class="p-gut"></span><span class="p-key">图纸类型:</span><span class="p-val"><svg width="11" height="10"><use href="#i-doc"/></svg>原理图</span></div>
      <div class="p-row"><span class="p-gut"></span><span class="p-key">文件名:</span><span class="p-val">102196.ewg</span></div>
      <div class="p-row"><span class="p-gut"></span><span class="p-key"><svg width="12" height="10"><use href="#i-frame"/></svg>图框:</span><span class="p-val">A4 原理图</span></div>
      <div class="p-row"><span class="p-gut"></span><span class="p-key">比例:</span><span class="p-val">1:1</span></div>
      <div class="p-row p-group"><span class="p-sign"></span>说明</div>
      <div class="p-row"><span class="p-gut"></span><span class="p-key p-tighter"><svg width="12" height="10"><use href="#i-flag"/></svg>图纸名称 (简体中文</span><span class="p-val"></span></div>
      <div class="p-row p-group"><span class="p-sign"></span>用户数据</div>
      <div class="p-row"><span class="p-gut"></span><span class="p-key">图纸分类:</span><span class="p-val"></span></div>
      <div class="p-row"><span class="p-gut"></span><span class="p-key">用户数据 2:</span><span class="p-val"></span></div>
      <div class="p-row p-group"><span class="p-sign"></span>可译数据</div>
      <div class="p-row"><span class="p-gut"></span><span class="p-key p-tight"><svg width="12" height="10"><use href="#i-flag"/></svg>可译数据 1 (简体中</span><span class="p-val"></span></div>
      <div class="p-row"><span class="p-gut"></span><span class="p-key p-tight"><svg width="12" height="10"><use href="#i-flag"/></svg>可译数据 2 (简体中</span><span class="p-val"></span></div>
    </div>
    <div class="hint-box d-flex">
      <div class="hint-sb d-flex flex-column align-items-center justify-content-between py-1"><svg width="7" height="5" viewBox="0 0 7 5"><path d="M0 5 3.500 0 7 5z" fill="#a9b4c8"/></svg><svg width="7" height="5" viewBox="0 0 7 5"><path d="M0 0 3.500 5 7 0z" fill="#a9b4c8"/></svg></div>
    </div>
  </aside>
</main>

<footer class="status-bar d-flex align-items-center">
  <span>(A) X : 208.9643401854, Y : 41.0821664027</span>
  <div class="status-progress me-1"></div>
  <div class="status-btn ms-1"><b>栅格</b> (F7)</div>
  <div class="status-btn"><b>正交</b> (F8)</div>
  <div class="status-btn"><b>捕捉</b> (F9)</div>
  <div class="status-btn">LWT (F10)</div>
  <div class="status-btn">OSNAP (F11)</div>
  <svg class="ms-1 me-1" width="11" height="11" viewBox="0 0 11 11"><rect x="2" y="0" width="8" height="7" fill="#2bb5b5" stroke="#333"/><rect y="6" width="6" height="4" fill="#777" stroke="#333"/></svg>
</footer>
<div class="task-strip"></div>

<script src="https://cdn.jsdelivr.net/npm/bootstrap@5.3.3/dist/js/bootstrap.bundle.min.js"></script>
</body>
</html>
